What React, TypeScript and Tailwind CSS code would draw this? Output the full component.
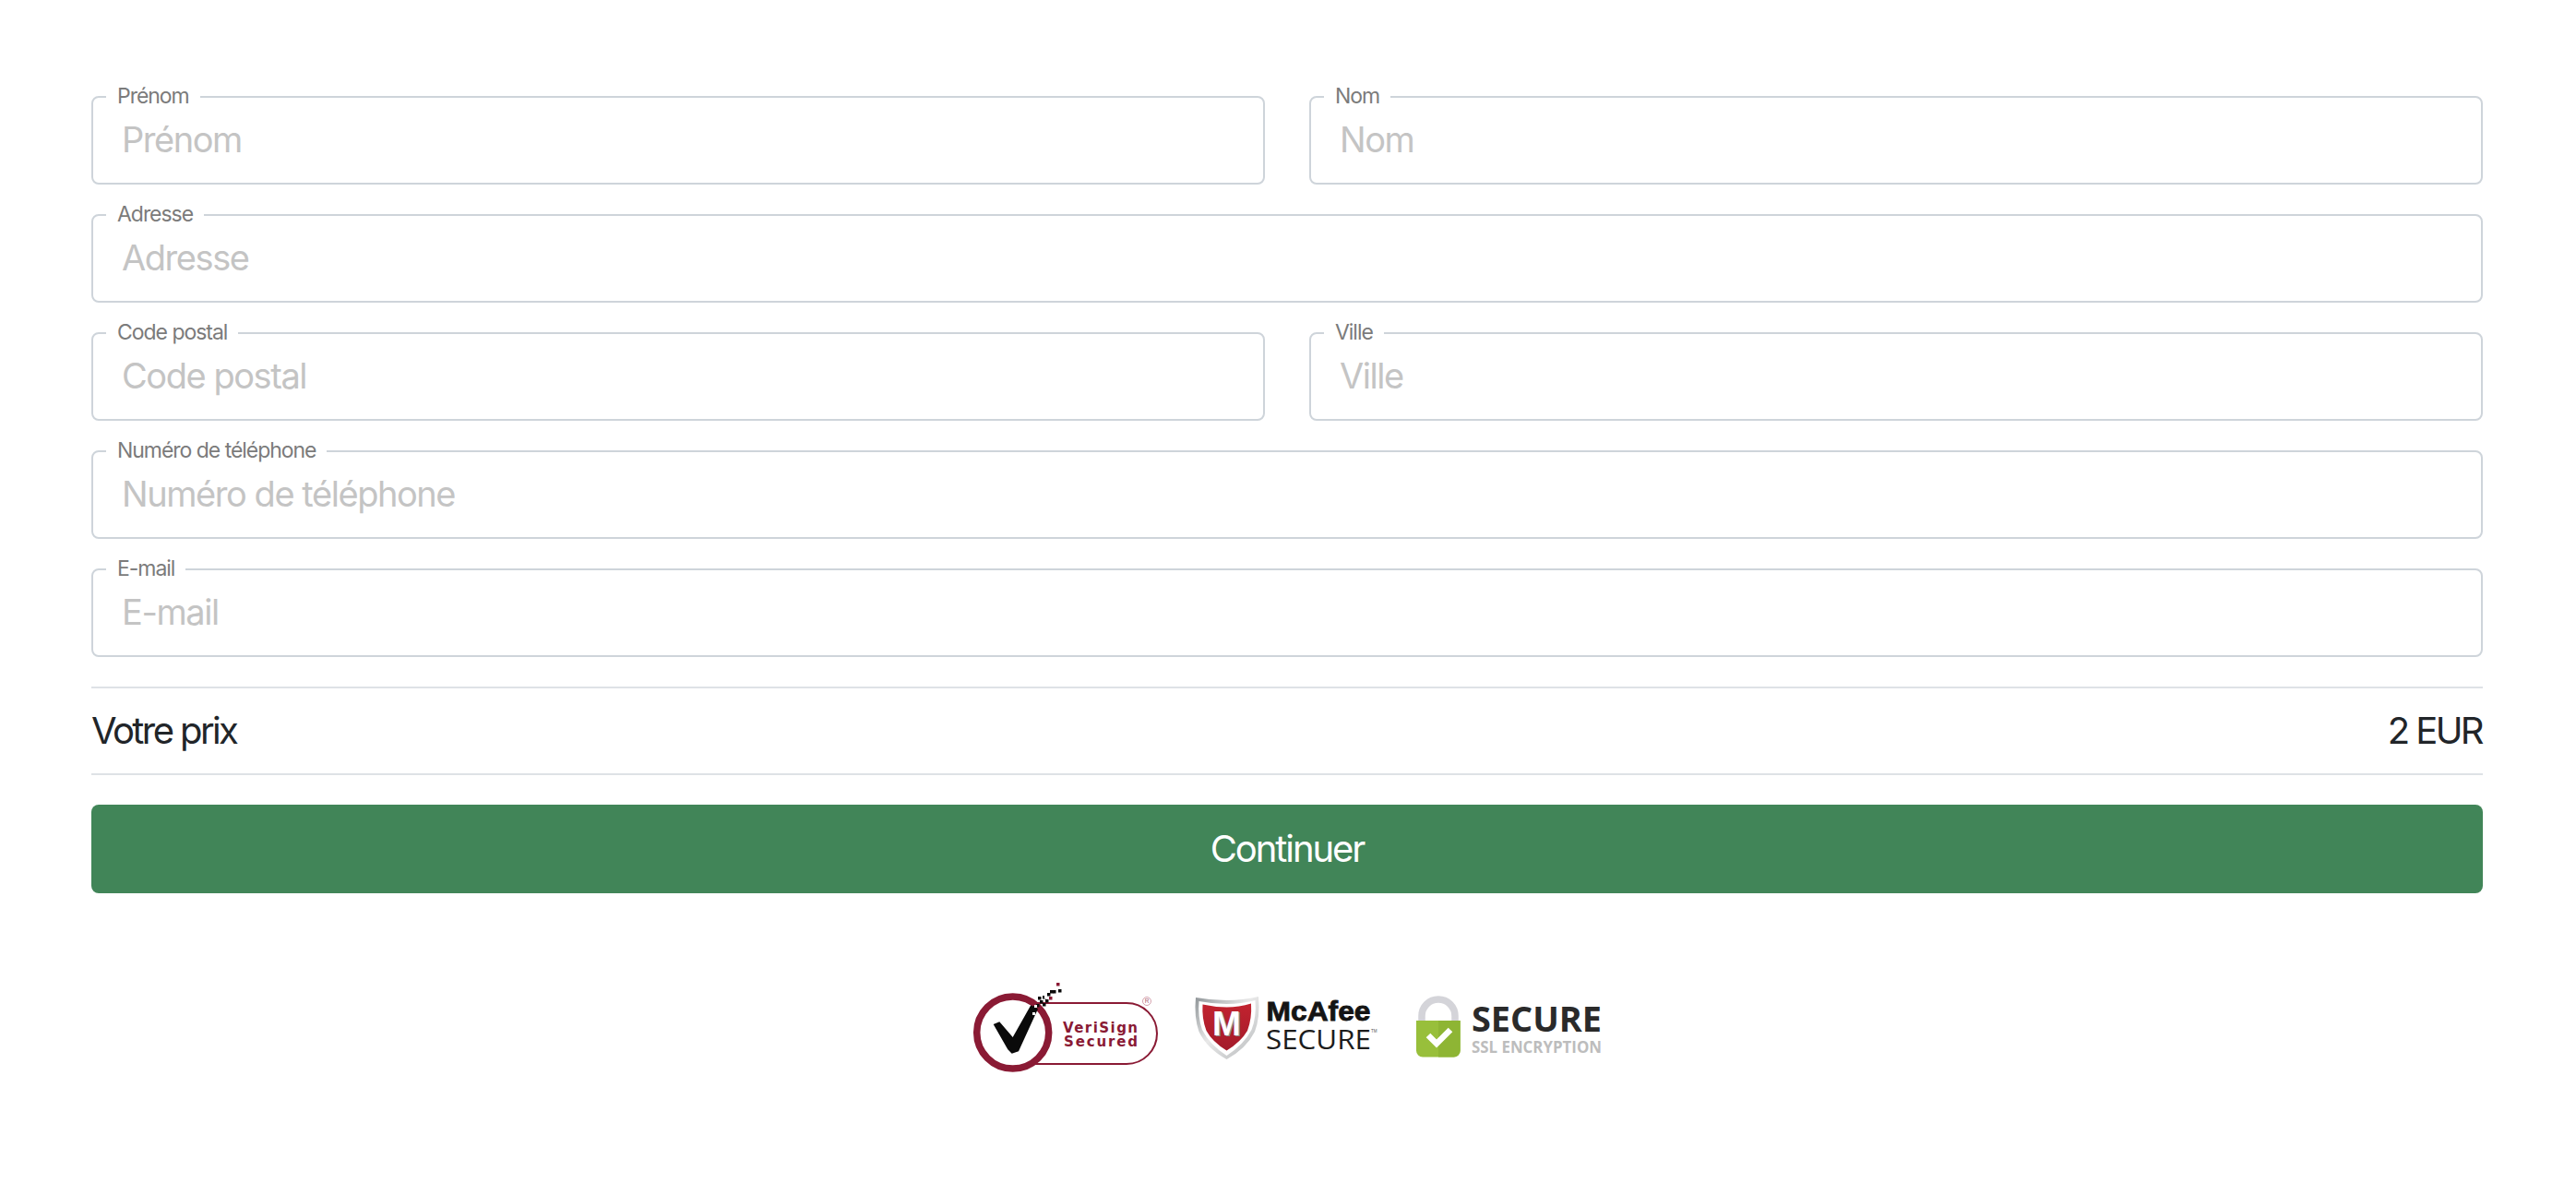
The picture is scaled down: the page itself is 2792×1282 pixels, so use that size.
const inter = "font-['Inter','Liberation_Sans',sans-serif]";

function Field({ label }: { label: string }) {
  return (
    <fieldset className="h-[108px] min-w-0 rounded-lg border-2 border-[#ced4da] px-[31px]">
      <legend className="ml-[-17px] px-3 pb-[2px] text-[23px] leading-[24px] tracking-[-0.045em] text-[#7b7b7b]">{label}</legend>
      <input
        placeholder={label}
        className="block h-[66px] w-full bg-transparent text-[38px] tracking-[-0.038em] text-[#212529] outline-none placeholder:text-[#c4c4c4]"
      />
    </fieldset>
  );
}

function VeriSignLogo() {
  const pixels = [
    [90, 1, "#8a1a34"], [92, 8, "#0a0a0a"], [83, 9, "#0a0a0a"], [86, 9, "#0a0a0a"], [80, 12, "#0a0a0a"],
    [75, 15, "#0a0a0a"], [70, 16, "#0a0a0a"], [82, 16, "#8a1a34"], [78, 19, "#0a0a0a"], [72, 20, "#0a0a0a"],
    [75, 23, "#0a0a0a"], [68, 24, "#0a0a0a"], [65, 26, "#0a0a0a"],
  ] as const;
  return (
    <svg width="200" height="100" viewBox="0 0 200 100" className="overflow-visible">
      <path d="M66 23 H166 A33 33 0 0 1 166 89 H66" fill="none" stroke="#8a1a34" strokeWidth="2" />
      <circle cx="42.7" cy="55" r="39" fill="#fff" stroke="#8a1a34" strokeWidth="7.5" />
      <path d="M21.7 46 L28.3 43.3 L42.7 60 L62.3 25.3 L70 29.3 L49 75.3 L41.7 77.7 L37.3 73.3 Z" fill="#0a0a0a" strokeLinejoin="round" />
      {pixels.map(([x, y, fill], i) => (
        <rect key={i} x={x} y={y} width="3.5" height="3.5" fill={fill} />
      ))}
      <rect x="64" y="33" width="3" height="3" fill="#fff" />
      <rect x="66" y="25" width="3" height="3" fill="#fff" />
      <rect x="77" y="15" width="3" height="3" fill="#fff" />
      <g fill="#8a1a34" fontFamily="'DejaVu Sans', sans-serif" fontWeight="700" fontSize="15">
        <text x="97" y="54.5" textLength="81" lengthAdjust="spacing">VeriSign</text>
        <text x="98" y="69.5" textLength="80" lengthAdjust="spacing">Secured</text>
      </g>
      <circle cx="188" cy="21" r="4.5" fill="none" stroke="#c98a99" strokeWidth="0.8" />
      <text x="188" y="23.4" textAnchor="middle" fontSize="6.5" fill="#a85a6d" fontFamily="'Liberation Sans', sans-serif">R</text>
    </svg>
  );
}

function McAfeeLogo() {
  return (
    <svg width="200" height="100" viewBox="0 0 200 100" className="overflow-visible">
      <defs>
        <linearGradient id="shieldEdge" x1="0" y1="0" x2="1" y2="1">
          <stop offset="0" stopColor="#8f9598" />
          <stop offset="0.45" stopColor="#e8e8e8" />
          <stop offset="1" stopColor="#b5b8ba" />
        </linearGradient>
        <linearGradient id="shieldRed" x1="0" y1="0" x2="0" y2="1">
          <stop offset="0" stopColor="#c2232f" />
          <stop offset="1" stopColor="#a31a2a" />
        </linearGradient>
      </defs>
      <path d="M1 17 Q18 20 34.5 20 Q52 20 69 16 Q71 38 65 54 Q56 72 34.5 84 Q13 72 4.5 54 Q-1 38 1 17 Z" fill="url(#shieldEdge)" />
      <path d="M4.5 21 Q20 24 34.5 24 Q50 24 65.5 20 Q67 38 61.5 52 Q53 68 34.5 80 Q16 68 8 52 Q3 38 4.5 21 Z" fill="#fff" />
      <path d="M8.5 24.5 Q22 27.5 34.5 27.5 Q48 27.5 61 23.5 Q62 40 57 53 Q50 65 34.5 74.5 Q19 65 12.5 53 Q7.5 40 8.5 24.5 Z" fill="url(#shieldRed)" />
      <text x="36" y="59" textAnchor="middle" fontSize="37" fontWeight="700" fill="#8d8d8d" fontFamily="'Liberation Sans', sans-serif">M</text>
      <text x="34.3" y="57.7" textAnchor="middle" fontSize="37" fontWeight="700" fill="#fff" fontFamily="'Liberation Sans', sans-serif">M</text>
      <text x="77.5" y="42" fontSize="30" fontWeight="700" fill="#141414" stroke="#141414" strokeWidth="0.8" fontFamily="'Liberation Sans', sans-serif" textLength="113" lengthAdjust="spacingAndGlyphs">McAfee</text>
      <text x="77" y="73.3" fontSize="29" fill="#1c1c1c" fontFamily="'Open Sans', sans-serif" textLength="114" lengthAdjust="spacingAndGlyphs">SECURE</text>
      <text x="191" y="55" fontSize="4.5" fill="#555" fontFamily="'Liberation Sans', sans-serif">TM</text>
    </svg>
  );
}

function SslLogo() {
  return (
    <svg width="200" height="100" viewBox="0 0 200 100" className="overflow-visible">
      <path d="M6 43 V37 A18 18 0 0 1 42 37 V43" fill="none" stroke="#d4d4d9" strokeWidth="7.5" />
      <path d="M0 42 H47.7 V74.5 A7 7 0 0 1 40.7 81.5 H7 A7 7 0 0 1 0 74.5 Z" fill="#98bf3b" />
      <path d="M24 42 H47.7 V74.5 A7 7 0 0 1 40.7 81.5 H24 Z" fill="#8eb534" />
      <path d="M13 58 L22 67 L37 52" fill="none" stroke="#fff" strokeWidth="6.5" />
      <text x="60" y="53.8" fontSize="37" fontWeight="700" fill="#2a2a2a" fontFamily="'Open Sans', sans-serif" textLength="141" lengthAdjust="spacingAndGlyphs">SECURE</text>
      <text x="60" y="76.7" fontSize="17" fontWeight="700" fill="#bdbdbd" fontFamily="'Open Sans', sans-serif" textLength="141" lengthAdjust="spacingAndGlyphs">SSL ENCRYPTION</text>
    </svg>
  );
}

export default function App() {
  return (
    <div className={`${inter} min-h-[1282px] bg-white pl-[99px] pr-[101px] pt-[92px]`}>
      <form className="flex flex-col gap-5">
        <div className="grid grid-cols-2 gap-x-12">
          <Field label="Prénom" />
          <Field label="Nom" />
        </div>
        <Field label="Adresse" />
        <div className="grid grid-cols-2 gap-x-12">
          <Field label="Code postal" />
          <Field label="Ville" />
        </div>
        <Field label="Numéro de téléphone" />
        <Field label="E-mail" />
      </form>

      <div className="mt-8 flex h-[96px] items-center justify-between border-y-2 border-[#dee2e6] text-[40px] tracking-[-0.065em] text-[#212529]">
        <span>Votre prix</span>
        <span className="pr-[1px]">2 EUR</span>
      </div>

      <button className="mt-8 block h-24 w-full rounded-lg bg-[#418558] text-[40px] tracking-[-0.052em] text-white">Continuer</button>

      <div className="mt-24 flex justify-center gap-10">
        <VeriSignLogo />
        <McAfeeLogo />
        <SslLogo />
      </div>
    </div>
  );
}
